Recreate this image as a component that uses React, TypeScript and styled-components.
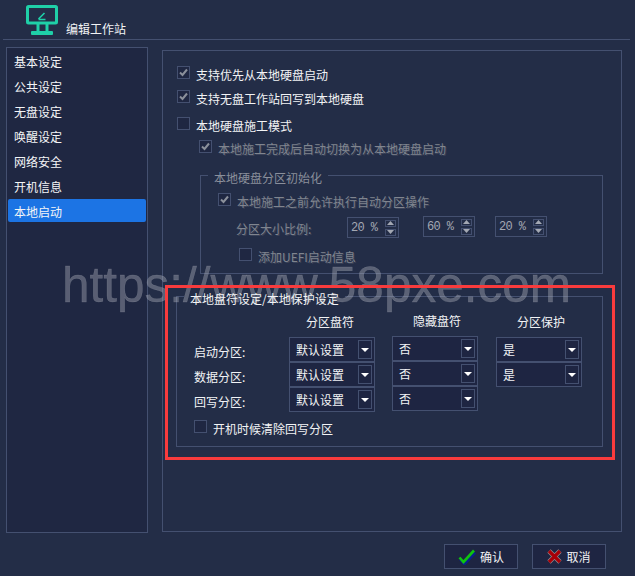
import React from "react";
import styled, { createGlobalStyle } from "styled-components";

const GlobalStyle = createGlobalStyle`
  html, body {
    margin: 0;
    padding: 0;
    background: #232d47;
  }
  * {
    box-sizing: border-box;
  }
`;

const menu = ["基本设定", "公共设定", "无盘设定", "唤醒设定", "网络安全", "开机信息", "本地启动"];

const CheckBox: React.FC<{ checked?: boolean }> = ({ checked }) => (
  <Box>
    {checked && (
      <svg width="11" height="11" viewBox="0 0 11 11">
        <path d="M2 5.5 L4.5 8 L9 2.5" fill="none" stroke="#8b909b" strokeWidth="2" />
      </svg>
    )}
  </Box>
);

const Option: React.FC<{ checked?: boolean; disabled?: boolean; indent?: number; top?: number; children: React.ReactNode }> = ({
  checked,
  disabled,
  indent = 0,
  top = 0,
  children,
}) => (
  <CheckRow $indent={indent} $top={top}>
    <CheckBox checked={checked} />
    <CheckText $disabled={disabled}>{children}</CheckText>
  </CheckRow>
);

const Select: React.FC<{ value: string }> = ({ value }) => (
  <SelectBox>
    <span>{value}</span>
    <ArrowBox>
      <Arrow />
    </ArrowBox>
  </SelectBox>
);

const Spinner: React.FC<{ value: number; top?: number; after?: number }> = ({ value, top = 0, after = 20 }) => (
  <SpinBox $top={top} $after={after}>
    <SpinValue>{value} %</SpinValue>
    <SpinButtons>
      <SpinButton>
        <svg width="7" height="4" viewBox="0 0 7 4"><path d="M3.5 0 L7 4 H0 Z" fill="#a3a8b3" /></svg>
      </SpinButton>
      <SpinButton>
        <svg width="7" height="4" viewBox="0 0 7 4"><path d="M0 0 H7 L3.5 4 Z" fill="#a3a8b3" /></svg>
      </SpinButton>
    </SpinButtons>
  </SpinBox>
);

export default function App() {
  return (
    <Page>
      <GlobalStyle />
      <Header>
        <svg width="33" height="31" viewBox="0 0 33 31">
          <rect x="1.5" y="1.5" width="29" height="16.5" rx="1" fill="none" stroke="#1fcfa8" strokeWidth="3" />
          <path d="M12.5 14 L18.5 8 M12.5 14.5 H19.5" fill="none" stroke="#1fcfa8" strokeWidth="1.6" />
          <path d="M12 19 V27 M21 19 V27" fill="none" stroke="#1fcfa8" strokeWidth="3" />
          <rect x="5" y="26" width="22" height="4" rx="1" fill="#1fcfa8" />
        </svg>
        <HeaderTitle>编辑工作站</HeaderTitle>
      </Header>

      <Body>
        <Sidebar>
          {menu.map((item) => (
            <MenuItem key={item} $active={item === "本地启动"}>
              {item}
            </MenuItem>
          ))}
        </Sidebar>

        <Panel>
          <Option checked>支持优先从本地硬盘启动</Option>
          <Option checked top={6}>支持无盘工作站回写到本地硬盘</Option>
          <Option top={9}>本地硬盘施工模式</Option>
          <Option checked disabled indent={22} top={5}>本地施工完成后自动切换为从本地硬盘启动</Option>

          <GroupInit>
            <Legend $disabled $shift={-10}>本地硬盘分区初始化</Legend>
            <Option checked disabled top={7}>本地施工之前允许执行自动分区操作</Option>
            <RatioRow>
              <RatioLabel>分区大小比例:</RatioLabel>
              <Spinner value={20} top={1} after={24} />
              <Spinner value={60} />
              <Spinner value={20} />
            </RatioRow>
            <Option disabled indent={21} top={10}>添加UEFI启动信息</Option>
          </GroupInit>

          <GroupLetter>
            <Legend $shift={-7}>本地盘符设定/本地保护设定</Legend>
            <Table>
              <LabelColumn>
                <RowLabel>启动分区:</RowLabel>
                <RowLabel>数据分区:</RowLabel>
                <RowLabel>回写分区:</RowLabel>
              </LabelColumn>
              <SelectColumn $after={17}>
                <ColumnTitle $pad={17}>分区盘符</ColumnTitle>
                <Select value="默认设置" />
                <Select value="默认设置" />
                <Select value="默认设置" />
              </SelectColumn>
              <SelectColumn $raised $after={18}>
                <ColumnTitle $pad={21}>隐藏盘符</ColumnTitle>
                <Select value="否" />
                <Select value="否" />
                <Select value="否" />
              </SelectColumn>
              <SelectColumn $after={0}>
                <ColumnTitle $pad={21}>分区保护</ColumnTitle>
                <Select value="是" />
                <Select value="是" />
              </SelectColumn>
            </Table>
            <Option indent={3} top={9}>开机时候清除回写分区</Option>
          </GroupLetter>
        </Panel>
      </Body>

      <Footer>
        <FooterButton>
          <svg width="18" height="16" viewBox="0 0 18 16">
            <path d="M2 9.5 L6 14 L16.5 2.5" fill="none" stroke="#0a1f8c" strokeWidth="3" transform="translate(0.5 1)" />
            <path d="M1.5 8.5 L5.5 13 L16 1.5" fill="none" stroke="#0fc40f" strokeWidth="2.6" />
          </svg>
          确认
        </FooterButton>
        <FooterButton>
          <svg width="15" height="15" viewBox="0 0 15 15">
            <path d="M2 2 L13 13 M13 2 L2 13" fill="none" stroke="#8f8a8f" strokeWidth="4.6" />
            <path d="M2 2 L13 13 M13 2 L2 13" fill="none" stroke="#a80008" strokeWidth="3.2" />
          </svg>
          取消
        </FooterButton>
      </Footer>

      <Watermark>https://www.58pxe.com</Watermark>
      <Highlight />
    </Page>
  );
}

const Page = styled.div`
  position: relative;
  width: 635px;
  height: 576px;
  overflow: hidden;
  background: #232d47;
  color: #f2f3f5;
  font-family: "Noto Sans CJK SC", "Liberation Sans", sans-serif;
  font-size: 12px;
`;

const Header = styled.div`
  display: flex;
  align-items: flex-start;
  gap: 7px;
  height: 40px;
  margin: 0 5px 0 3px;
  padding: 5px 0 0 23px;
  border-bottom: 1px solid #445070;
`;

const HeaderTitle = styled.div`
  margin-top: 15px;
  line-height: 18px;
`;

const Body = styled.div`
  display: flex;
  align-items: flex-end;
  height: 493px;
  padding-left: 6px;
`;

const Sidebar = styled.div`
  display: flex;
  flex-direction: column;
  gap: 2px;
  width: 142px;
  height: 486px;
  padding: 1px;
  background: #1f2742;
  border: 1px solid #445070;
`;

const MenuItem = styled.div<{ $active?: boolean }>`
  height: 23px;
  padding-left: 6px;
  line-height: 26px;
  border-radius: 2px;
  color: #f4f5f7;
  background: ${(p) => (p.$active ? "#1c74e4" : "transparent")};
`;

const Panel = styled.div`
  width: 460px;
  height: 482px;
  margin: 0 0 1px 14px;
  padding: 15px 0 0 14px;
  border: 1px solid #445070;
`;

const CheckRow = styled.div<{ $indent: number; $top: number }>`
  display: flex;
  align-items: flex-start;
  gap: 6px;
  height: 18px;
  margin-left: ${(p) => p.$indent}px;
  margin-top: ${(p) => p.$top}px;
`;

const Box = styled.div`
  display: flex;
  align-items: center;
  justify-content: center;
  flex: none;
  width: 13px;
  height: 13px;
  background: #1f2742;
  border: 1px solid #445070;
`;

const CheckText = styled.div<{ $disabled?: boolean }>`
  line-height: 18px;
  white-space: nowrap;
  color: ${(p) => (p.$disabled ? "#80858f" : "#f2f3f5")};
  text-shadow: ${(p) => (p.$disabled ? "1px 1px 0 #3a4259" : "none")};
`;

const Group = styled.fieldset`
  margin: 0;
  min-width: 0;
  border: 1px solid #445070;
`;

const GroupInit = styled(Group)`
  width: 403px;
  height: 109px;
  margin: 7px 0 0 23px;
  padding: 0 0 0 17px;
`;

const GroupLetter = styled(Group)`
  width: 427px;
  height: 161px;
  margin: 12px 0 0 -1px;
  padding: 0 0 0 14px;
`;

const Legend = styled.legend<{ $disabled?: boolean; $shift: number }>`
  position: relative;
  z-index: 1;
  height: 21px;
  margin-left: ${(p) => p.$shift}px;
  padding: 5px 6px 0;
  line-height: 16px;
  color: ${(p) => (p.$disabled ? "#8a8f9b" : "#f2f3f5")};
`;

const RatioRow = styled.div`
  display: flex;
  align-items: flex-start;
  height: 22px;
  margin: 5px 0 0 18px;
`;

const RatioLabel = styled.div`
  width: 111px;
  line-height: 26px;
  color: #80858f;
  text-shadow: 1px 1px 0 #3a4259;
`;

const SpinBox = styled.div<{ $top: number; $after: number }>`
  display: flex;
  align-items: center;
  justify-content: space-between;
  width: 52px;
  height: 21px;
  margin-top: ${(p) => p.$top}px;
  margin-right: ${(p) => p.$after}px;
  padding: 0 2px 0 3px;
  border: 1px solid #445070;
`;

const SpinValue = styled.span`
  font-family: "Liberation Mono", monospace;
  font-size: 12px;
  letter-spacing: -0.6px;
  color: #a3a8b3;
`;

const SpinButtons = styled.div`
  display: flex;
  flex-direction: column;
  gap: 2px;
`;

const SpinButton = styled.div`
  display: flex;
  align-items: center;
  justify-content: center;
  width: 11px;
  height: 7px;
  border: 1px solid #445070;
`;

const Table = styled.div`
  display: flex;
  align-items: flex-start;
  height: 104px;
`;

const LabelColumn = styled.div`
  display: flex;
  flex-direction: column;
  width: 98px;
  padding: 32px 0 0 3px;
`;

const RowLabel = styled.div`
  height: 25px;
  line-height: 25px;
`;

const SelectColumn = styled.div<{ $raised?: boolean; $after: number }>`
  display: flex;
  flex-direction: column;
  width: 86px;
  margin-right: ${(p) => p.$after}px;
  margin-top: ${(p) => (p.$raised ? "-1px" : "0")};
`;

const ColumnTitle = styled.div<{ $pad: number }>`
  height: 30px;
  padding-left: ${(p) => p.$pad}px;
  padding-top: 6px;
  line-height: 18px;
`;

const SelectBox = styled.div`
  display: flex;
  align-items: center;
  justify-content: space-between;
  height: 25px;
  padding: 0 2px 0 6px;
  background: #1e2542;
  border: 1px solid #445070;
`;

const ArrowBox = styled.div`
  display: flex;
  align-items: center;
  justify-content: center;
  width: 14px;
  height: 19px;
  border: 1px solid #445070;
`;

const Arrow = styled.div`
  width: 0;
  height: 0;
  border-left: 4px solid transparent;
  border-right: 4px solid transparent;
  border-top: 4px solid #ffffff;
`;

const Footer = styled.div`
  display: flex;
  justify-content: flex-end;
  gap: 14px;
  padding: 11px 29px 0 0;
`;

const FooterButton = styled.div`
  display: flex;
  align-items: center;
  justify-content: center;
  gap: 4px;
  width: 74px;
  height: 25px;
  background: #1e2542;
  border: 1px solid #445070;
`;

const Watermark = styled.div`
  position: absolute;
  top: 257px;
  left: 62px;
  font-family: "Liberation Sans", sans-serif;
  font-size: 49.5px;
  line-height: 56px;
  white-space: nowrap;
  color: rgba(180, 182, 192, 0.39);
  -webkit-text-stroke: 0.4px rgba(180, 182, 192, 0.3);
  pointer-events: none;
`;

const Highlight = styled.div`
  position: absolute;
  top: 285px;
  left: 165px;
  width: 450px;
  height: 175px;
  border: 3px solid #f83b3d;
  pointer-events: none;
`;
